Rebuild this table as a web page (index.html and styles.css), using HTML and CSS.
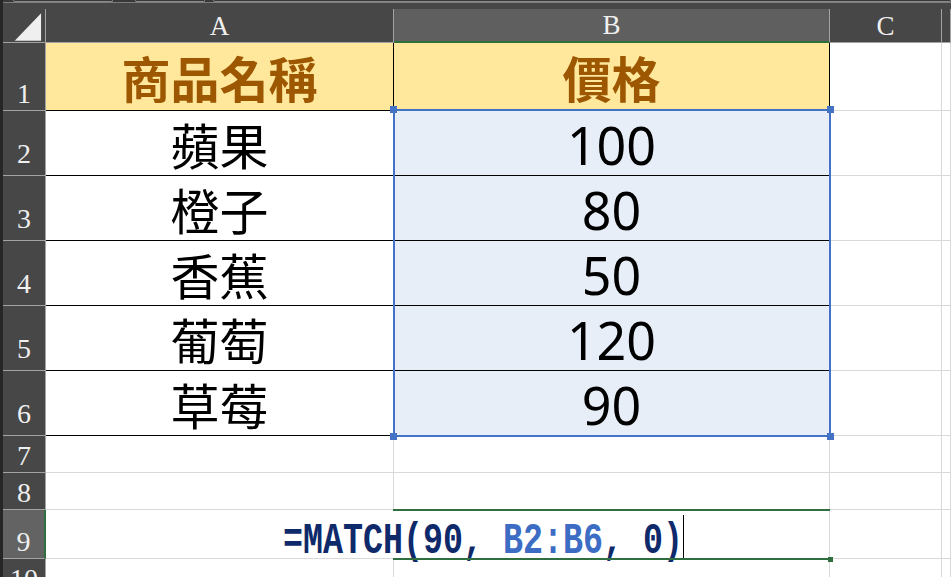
FILE: index.html
```html
<!DOCTYPE html>
<html lang="zh-Hant">
<head>
<meta charset="utf-8">
<title>MATCH</title>
<link rel="stylesheet" href="styles.css">
</head>
<body>
<div class="app">
  <div class="edge"></div>
  <div class="main">
    <div class="tabs">
      <div class="tab t1"></div>
      <div class="tab t2"></div>
      <div class="tab t3"></div>
    </div>
    <div class="topgap"></div>
    <div class="stack">
    <div class="sheet">
      <div class="corner"><svg width="43" height="34" viewBox="0 0 43 34"><polygon points="12,32 39,32 39,4" fill="#efefef"/></svg></div>
      <div class="ch">A</div>
      <div class="ch ch-active">B</div>
      <div class="ch">C</div>
      <div class="ch"></div>

      <div class="rh">1</div>
      <div class="c tb hd">商品名稱</div>
      <div class="c tb hd">價格</div>
      <div class="c"></div>
      <div class="c"></div>

      <div class="rh tall">2</div>
      <div class="c tb name">蘋果</div>
      <div class="c tb sel num">100</div>
      <div class="c"></div>
      <div class="c"></div>

      <div class="rh tall">3</div>
      <div class="c tb name">橙子</div>
      <div class="c tb sel num">80</div>
      <div class="c"></div>
      <div class="c"></div>

      <div class="rh tall">4</div>
      <div class="c tb name">香蕉</div>
      <div class="c tb sel num">50</div>
      <div class="c"></div>
      <div class="c"></div>

      <div class="rh tall">5</div>
      <div class="c tb name">葡萄</div>
      <div class="c tb sel num">120</div>
      <div class="c"></div>
      <div class="c"></div>

      <div class="rh tall">6</div>
      <div class="c tb name">草莓</div>
      <div class="c tb sel num">90</div>
      <div class="c"></div>
      <div class="c"></div>

      <div class="rh">7</div>
      <div class="c"></div>
      <div class="c"></div>
      <div class="c"></div>
      <div class="c"></div>

      <div class="rh">8</div>
      <div class="c"></div>
      <div class="c"></div>
      <div class="c"></div>
      <div class="c"></div>

      <div class="rh rh-active">9</div>
      <div class="c formula"><span class="ftext">=MATCH(90, <span class="ref">B2:B6</span>, 0)</span><span class="caret"></span></div>
      <div class="c"></div>
      <div class="c"></div>

      <div class="rh">10</div>
      <div class="c"></div>
      <div class="c"></div>
      <div class="c"></div>
      <div class="c"></div>
    </div>
    <div class="sheet overlay">
      <div class="selbox">
        <span class="h tl"></span><span class="h tr"></span><span class="h bl"></span><span class="h br"></span>
      </div>
      <div class="activebox"><span class="gh"></span></div>
    </div>
    </div>
  </div>
</div>
</body>
</html>
```

FILE: styles.css
```css
html, body {
  margin: 0;
  padding: 0;
  height: 100%;
  overflow: hidden;
  background: #ffffff;
}

.app {
  display: flex;
  height: 577px;
  overflow: hidden;
}

.edge {
  width: 3px;
  flex: none;
  background: #262626;
}

.main {
  flex: 1;
  display: flex;
  flex-direction: column;
  overflow: hidden;
}

.tabs {
  height: 3px;
  flex: none;
  background: #383838;
  display: flex;
  box-sizing: border-box;
  border-bottom: 1px solid #7d7d7d;
}

.tab {
  height: 2px;
  box-sizing: border-box;
  border: 1px solid #8a8a8a;
  border-top: none;
  border-radius: 0 0 3px 3px;
}

.t1 { margin-left: 10px; width: 100px; }
.t2 { margin-left: 22px; width: 70px; }
.t3 { margin-left: 8px; flex: 1; }

.topgap {
  height: 6px;
  flex: none;
  background: #474747;
}

.stack {
  display: grid;
}

.sheet {
  grid-area: 1 / 1;
  display: grid;
  grid-template-columns: 43px 348px 436px 112px 1fr;
  grid-template-rows: 34px 68px 65px 65px 65px 65px 65px 37px 37px 49px 37px;
}

.overlay {
  pointer-events: none;
}

.corner {
  background: #474747;
  box-sizing: border-box;
  border-right: 1px solid #a3a3a3;
  border-bottom: 1px solid #a3a3a3;
  display: flex;
}

.ch, .rh {
  font-family: "Liberation Serif", "Times New Roman", serif;
  color: #efefef;
  font-size: 27px;
  line-height: 1;
  background: #474747;
  box-sizing: border-box;
  display: flex;
  justify-content: center;
  align-items: flex-end;
}

.ch {
  border-right: 1px solid #a3a3a3;
  border-bottom: 1px solid #a3a3a3;
  padding-bottom: 2px;
}

.ch-active {
  background: #5f5f5f;
  border-bottom: 2px solid #2f6e3f;
}

.rh {
  font-size: 28px;
  border-right: 1px solid #a3a3a3;
  border-bottom: 1px solid #a3a3a3;
  padding-bottom: 2px;
}

.rh.tall {
  padding-bottom: 7px;
}

.rh-active {
  background: #636363;
  border-right: 2px solid #2f6e3f;
}

.c {
  box-sizing: border-box;
  border-right: 1px solid #d9d9d9;
  border-bottom: 1px solid #d9d9d9;
  display: flex;
  justify-content: center;
  align-items: center;
  line-height: 1;
}

.tb {
  border-right-color: #000000;
  border-bottom-color: #000000;
}

.hd {
  background: #ffe89c;
  color: #9c5700;
  font-family: "Noto Sans CJK TC", "Noto Sans CJK SC", sans-serif;
  font-weight: bold;
  font-size: 49px;
}

.name {
  color: #000000;
  font-family: "Noto Sans CJK TC", "Noto Sans CJK SC", sans-serif;
  font-size: 49px;
}

.sel {
  background: #e8eef8;
}

.num {
  color: #000000;
  font-family: "Noto Sans", sans-serif;
  font-size: 52px;
  padding-top: 3px;
}

.formula {
  grid-column: 2 / 4;
  grid-row: 10;
  justify-content: flex-start;
  align-items: flex-end;
  padding-left: 237px;
  font-family: "Liberation Mono", "Courier New", monospace;
  font-weight: bold;
  font-size: 33.33px;
  color: #0f2a6b;
  white-space: pre;
}

.ftext {
  display: inline-block;
  line-height: 1;
  margin-bottom: -3px;
  transform: scaleY(1.32);
  transform-origin: 50% 25px;
}

.ref {
  color: #3d6cc4;
}

.caret {
  width: 1px;
  height: 43px;
  background: #000000;
  flex: none;
}

.selbox {
  grid-column: 3;
  grid-row: 3 / 8;
  margin: -2px -1px -1px -1px;
  border: 2px solid #4472c4;
  position: relative;
}

.h {
  position: absolute;
  width: 7px;
  height: 7px;
  background: #4472c4;
}

.tl { left: -5px; top: -5px; }
.tr { right: -5px; top: -5px; }
.bl { left: -5px; bottom: -5px; }
.br { right: -5px; bottom: -5px; }

.activebox {
  grid-column: 3;
  grid-row: 10;
  margin: -1px 0 -1px -1px;
  border-top: 2px solid #2f6e3f;
  border-bottom: 2px solid #2f6e3f;
  position: relative;
}

.gh {
  position: absolute;
  right: -3px;
  bottom: -4px;
  width: 5px;
  height: 5px;
  background: #2f6e3f;
}
```
